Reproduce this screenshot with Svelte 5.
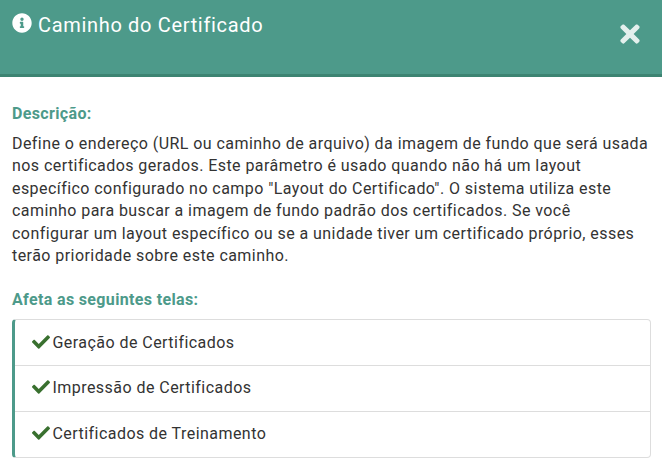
<script>
  const screens = ['Geração de Certificados', 'Impressão de Certificados', 'Certificados de Treinamento'];
</script>

<div class="modal">
  <header class="head">
    <h2 class="title">
      <svg class="info" viewBox="0 0 512 512" aria-hidden="true"><path d="M256 8C119.043 8 8 119.083 8 256c0 136.997 111.043 248 248 248s248-111.003 248-248C504 119.083 392.957 8 256 8zm0 110c23.196 0 42 18.804 42 42s-18.804 42-42 42-42-18.804-42-42 18.804-42 42-42zm56 254c0 6.627-5.373 12-12 12h-88c-6.627 0-12-5.373-12-12v-24c0-6.627 5.373-12 12-12h12v-64h-12c-6.627 0-12-5.373-12-12v-24c0-6.627 5.373-12 12-12h64c6.627 0 12 5.373 12 12v100h12c6.627 0 12 5.373 12 12v24z"/></svg>
      Caminho do Certificado
    </h2>
    <button class="close" aria-label="Fechar">
      <svg viewBox="0 0 352 512" aria-hidden="true"><path d="M242.72 256l100.07-100.07c12.28-12.28 12.28-32.19 0-44.48l-22.24-22.24c-12.28-12.28-32.19-12.28-44.48 0L176 189.28 75.93 89.21c-12.28-12.28-32.19-12.28-44.48 0L9.21 111.45c-12.28 12.28-12.28 32.19 0 44.48L109.28 256 9.21 356.07c-12.28 12.28-12.28 32.19 0 44.48l22.24 22.24c12.28 12.28 32.2 12.28 44.48 0L176 322.72l100.07 100.07c12.28 12.28 32.2 12.28 44.48 0l22.24-22.24c12.28-12.28 12.28-32.19 0-44.48L242.72 256z"/></svg>
    </button>
  </header>

  <div class="body">
    <h3 class="label">Descrição:</h3>
    <p class="text">Define o endereço (URL ou caminho de arquivo) da imagem de fundo que será usada nos certificados gerados. Este parâmetro é usado quando não há um layout específico configurado no campo "Layout do Certificado". O sistema utiliza este caminho para buscar a imagem de fundo padrão dos certificados. Se você configurar um layout específico ou se a unidade tiver um certificado próprio, esses terão prioridade sobre este caminho.</p>

    <h3 class="label second">Afeta as seguintes telas:</h3>
    <ul class="list">
      {#each screens as screen}
        <li class="row">
          <svg class="check" viewBox="0 0 512 512" aria-hidden="true"><path d="M173.898 439.404l-166.4-166.4c-9.997-9.997-9.997-26.206 0-36.204l36.203-36.204c9.997-9.998 26.207-9.998 36.204 0L192 312.69 432.095 72.596c9.997-9.997 26.207-9.997 36.204 0l36.203 36.204c9.997 9.997 9.997 26.206 0 36.204l-294.4 294.401c-9.998 9.997-26.207 9.997-36.204-.001z"/></svg>
          {screen}
        </li>
      {/each}
    </ul>
  </div>
</div>

<style>
  :global(body) {
    margin: 0;
    background: #fff;
  }
  .modal {
    width: 662px;
    height: 467px;
    overflow: hidden;
    font-family: Roboto, sans-serif;
    color: #333;
  }
  .head {
    display: flex;
    justify-content: space-between;
    height: 74px;
    background: #4d9a8a;
    border-bottom: 3px solid #3d8472;
    color: #fff;
  }
  .title {
    display: flex;
    align-items: center;
    gap: 6px;
    height: 20px;
    margin: 15px 0 0 12px;
    font-size: 20px;
    font-weight: 400;
    line-height: 24px;
    letter-spacing: 0.67px;
  }
  .info {
    width: 20px;
    height: 20px;
    margin-top: -4px;
    fill: #fff;
  }
  .close {
    width: 20px;
    height: 28px;
    margin: 20px 22px 0 0;
    padding: 0;
    border: 0;
    background: none;
    opacity: 0.85;
  }
  .close svg {
    display: block;
    width: 20px;
    height: 28px;
    fill: #fff;
  }
  .body {
    padding: 27px 11px 0 12px;
  }
  .label {
    margin: 0;
    font-size: 16px;
    line-height: 20px;
    font-weight: 700;
    letter-spacing: 0.35px;
    color: #4d9a8a;
  }
  .second {
    margin-top: 23px;
  }
  .text {
    margin: 9px 0 0;
    font-size: 16px;
    line-height: 22.4px;
    letter-spacing: 0.44px;
    color: #333;
  }
  .list {
    margin: 9px 0 0;
    padding: 0;
    list-style: none;
    border: 1px solid #ddd;
    border-left: 3px solid #4d9a8a;
    border-radius: 4px;
  }
  .row {
    display: flex;
    align-items: center;
    gap: 2.5px;
    box-sizing: border-box;
    height: 45px;
    padding: 0 0 1px 17px;
    font-size: 16px;
    letter-spacing: 0.45px;
    color: #333;
  }
  .row + .row {
    height: 46px;
    padding-bottom: 3px;
    border-top: 1px solid #ddd;
  }
  .check {
    width: 18px;
    height: 18px;
    fill: #39702f;
  }
</style>
